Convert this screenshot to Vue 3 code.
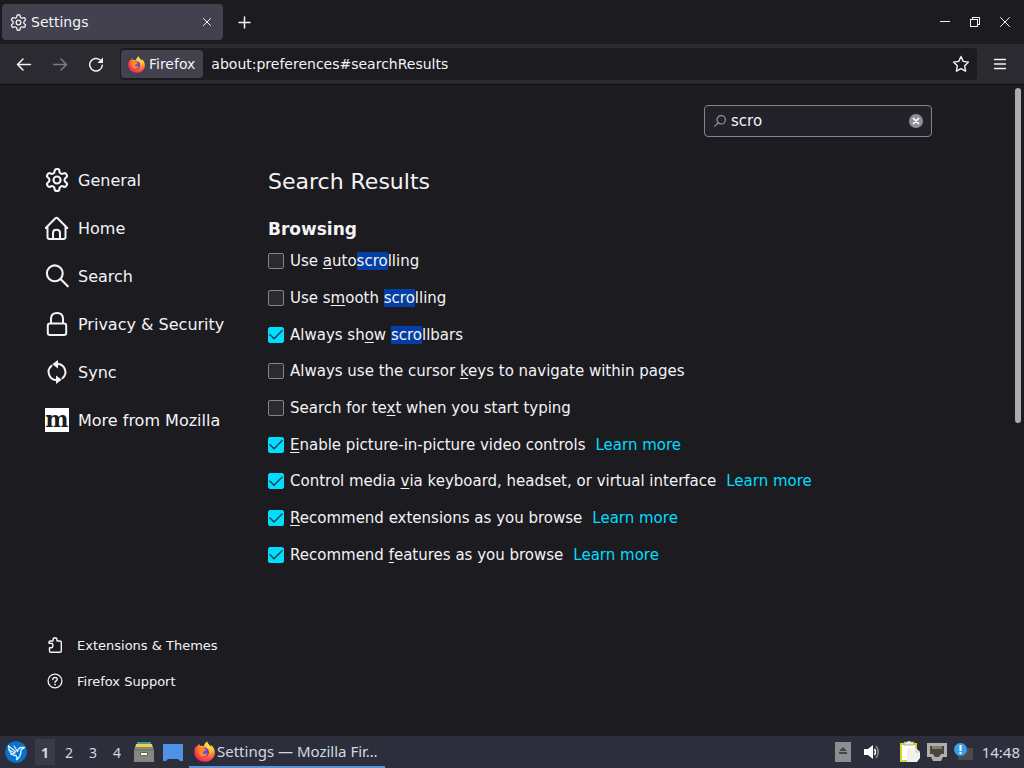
<script setup>
import { ref } from 'vue'

const url = ref('about:preferences#searchResults')
const query = ref('scro')

const gear =
  'M12.22 2h-.44a2 2 0 0 0-2 2v.18a2 2 0 0 1-1 1.73l-.43.25a2 2 0 0 1-2 0l-.15-.08a2 2 0 0 0-2.73.73l-.22.38a2 2 0 0 0 .73 2.73l.15.1a2 2 0 0 1 1 1.72v.51a2 2 0 0 1-1 1.74l-.15.09a2 2 0 0 0-.73 2.73l.22.38a2 2 0 0 0 2.73.73l.15-.08a2 2 0 0 1 2 0l.43.25a2 2 0 0 1 1 1.73V20a2 2 0 0 0 2 2h.44a2 2 0 0 0 2-2v-.18a2 2 0 0 1 1-1.73l.43-.25a2 2 0 0 1 2 0l.15.08a2 2 0 0 0 2.73-.73l.22-.39a2 2 0 0 0-.73-2.73l-.15-.08a2 2 0 0 1-1-1.74v-.5a2 2 0 0 1 1-1.74l.15-.09a2 2 0 0 0 .73-2.73l-.22-.38a2 2 0 0 0-2.73-.73l-.15.08a2 2 0 0 1-2 0l-.43-.25a2 2 0 0 1-1-1.73V4a2 2 0 0 0-2-2z'

const nav = [
  { id: 'general', label: 'General' },
  { id: 'home', label: 'Home' },
  { id: 'search', label: 'Search' },
  { id: 'privacy', label: 'Privacy & Security' },
  { id: 'sync', label: 'Sync' },
  { id: 'mozilla', label: 'More from Mozilla' }
]

// Each label is split into parts: u = access key, m = search match.
const options = ref([
  { id: 'auto', on: false, parts: [{ t: 'Use ' }, { t: 'a', k: 'u' }, { t: 'uto' }, { t: 'scro', k: 'm' }, { t: 'lling' }] },
  { id: 'smooth', on: false, parts: [{ t: 'Use s' }, { t: 'm', k: 'u' }, { t: 'ooth ' }, { t: 'scro', k: 'm' }, { t: 'lling' }] },
  { id: 'bars', on: true, parts: [{ t: 'Always sh' }, { t: 'o', k: 'u' }, { t: 'w ' }, { t: 'scro', k: 'm' }, { t: 'llbars' }] },
  { id: 'cursor', on: false, parts: [{ t: 'Always use the cursor ' }, { t: 'k', k: 'u' }, { t: 'eys to navigate within pages' }] },
  { id: 'typing', on: false, parts: [{ t: 'Search for te' }, { t: 'x', k: 'u' }, { t: 't when you start typing' }] },
  { id: 'pip', on: true, link: true, parts: [{ t: 'E', k: 'u' }, { t: 'nable picture-in-picture video controls' }] },
  { id: 'media', on: true, link: true, parts: [{ t: 'Control media ' }, { t: 'v', k: 'u' }, { t: 'ia keyboard, headset, or virtual interface' }] },
  { id: 'ext', on: true, link: true, parts: [{ t: 'R', k: 'u' }, { t: 'ecommend extensions as you browse' }] },
  { id: 'feat', on: true, link: true, parts: [{ t: 'Recommend ' }, { t: 'f', k: 'u' }, { t: 'eatures as you browse' }] }
])
</script>

<template>
  <div class="screen">
    <svg class="defs" width="0" height="0" aria-hidden="true">
      <defs>
        <radialGradient id="flame" cx="0.75" cy="0.15" r="1">
          <stop offset="0" stop-color="#fff04a" />
          <stop offset="0.35" stop-color="#ffb52a" />
          <stop offset="0.65" stop-color="#ff5a36" />
          <stop offset="1" stop-color="#e4196f" />
        </radialGradient>
        <radialGradient id="globe" cx="0.5" cy="0.4" r="0.6">
          <stop offset="0" stop-color="#8a4ff0" />
          <stop offset="1" stop-color="#5a35b8" />
        </radialGradient>
        <symbol id="fox" viewBox="0 0 20 20">
          <path fill="url(#flame)" d="M12.6.3c.3 1.8 1.3 2.8 2.6 4 .5.4 1 .9 1.3 1.4 0-.8-.2-1.5-.5-2.2 2.5 1.7 3.9 4.5 3.9 7.4 0 5-4.3 8.900-9.700 8.900S.3 16 .3 10.700c0-2.400.8-4.700 2.200-6.300 0 .5 0 .9.2 1.300C3.200 4.300 4 3.200 5 2.500c0 .9.3 1.600.9 2.200 1.300-.3 2.400-.1 3.400.4C9.700 3.200 10.800 1.400 12.600.3z" />
          <circle cx="10" cy="10.600" r="4.300" fill="url(#globe)" />
          <path fill="#ff8a22" d="M4.800 6.500c1.700-.7 3.500-.4 4.700.6 1 .1 1.800.3 2 .8-.2 1.100-1.700 1.300-2.400 1.900-.5.500-.2 1.300-.9 1.700 1 1.500 3.200 1 4.600.2-.7 2.500-3.200 3.800-5.600 2.900C4.300 13.500 3.500 9.500 4.800 6.500z" />
        </symbol>
      </defs>
    </svg>

    <header class="tabs">
      <div class="tab">
        <svg width="17" height="17" viewBox="1 1 22 22" class="line"><path :d="gear" stroke-width="1.700" /><circle cx="12" cy="12" r="3" stroke-width="1.700" /></svg>
        <span class="tab-title">Settings</span>
        <button class="bare" aria-label="Close tab">
          <svg width="16" height="16" viewBox="0 0 16 16" class="line"><path d="M4.500 4.500l7 7M11.500 4.500l-7 7" /></svg>
        </button>
      </div>
      <button class="bare new-tab" aria-label="New tab">
        <svg width="16" height="16" viewBox="0 0 16 16" class="line"><path d="M8.500 3v11M3 8.500h11" stroke-width="1.500" /></svg>
      </button>
      <div class="window-buttons">
        <button class="bare" aria-label="Minimize"><svg width="12" height="12" viewBox="0 0 12 12" class="line crisp"><path d="M1 5.500h10" /></svg></button>
        <button class="bare" aria-label="Restore"><svg width="12" height="12" viewBox="0 0 12 12" class="line crisp"><path d="M1.500 3.500h7v7h-7zM3.500 3V1.500h7v7H9" /></svg></button>
        <button class="bare" aria-label="Close"><svg width="12" height="12" viewBox="0 0 12 12" class="line"><path d="M1.500 1.500l9 9M10.500 1.500l-9 9" /></svg></button>
      </div>
    </header>

    <div class="toolbar">
      <button class="bare" aria-label="Back"><svg width="16" height="16" viewBox="0 0 16 16" class="line"><path d="M14.500 8.500H1.500M7 3l-5.500 5.500L7 14" stroke-width="1.500" /></svg></button>
      <button class="bare" aria-label="Forward" disabled><svg width="16" height="16" viewBox="0 0 16 16" class="line dim"><path d="M1.500 8.500h13M9 3l5.500 5.500L9 14" stroke-width="1.500" /></svg></button>
      <button class="bare" aria-label="Reload"><svg width="16" height="16" viewBox="0 0 16 16" class="line"><path d="M14.300 9.200A6.300 6.300 0 1 1 12.200 4" stroke-width="1.500" /><path d="M15 1.500v5.500H9.500z" fill="currentColor" stroke="none" /></svg></button>
      <div class="urlbar">
        <button class="identity"><svg width="17" height="17"><use href="#fox" /></svg>Firefox</button>
        <input v-model="url" class="url" type="text" aria-label="Address" />
        <button class="bare star" aria-label="Bookmark"><svg width="18" height="18" viewBox="0 0 18 18" class="line"><path d="M9 1.500l2.300 4.900 5.200.7-3.800 3.700.9 5.400L9 13.600l-4.600 2.600.9-5.400L1.500 7.100l5.200-.7z" stroke-width="1.400" /></svg></button>
      </div>
      <button class="bare menu" aria-label="Menu"><svg width="14" height="14" viewBox="0 0 14 14" class="line"><path d="M1.500 2.500h11M1.500 7h11M1.500 11.500h11" stroke-width="1.300" /></svg></button>
    </div>

    <div class="page">
      <aside class="sidebar">
        <nav class="categories">
          <a v-for="n in nav" :key="n.id" href="#" class="category">
            <span v-if="n.id === 'mozilla'" class="moz" aria-hidden="true">m</span>
            <svg v-else width="24" height="24" viewBox="0 0 24 24" class="line">
              <g v-if="n.id === 'general'" stroke-width="1.900" transform="translate(-1.200 -1.200) scale(1.100)"><path :d="gear" /><circle cx="12" cy="12" r="3.200" /></g>
              <g v-if="n.id === 'home'" stroke-width="2"><path d="M.7 12L10.400 2.300Q11.500 1.200 12.600 2.300L22.300 12M2.500 10.500V21Q2.500 23 4.500 23H18.500Q20.500 23 20.500 21V10.500M8 23V17Q8 13.800 11.500 13.800T15 17V23" /></g>
              <g v-if="n.id === 'search'" stroke-width="2.100"><circle cx="9.800" cy="9.300" r="7.900" /><path d="M15.500 15L22.800 22.300" /></g>
              <g v-if="n.id === 'privacy'" stroke-width="2"><rect x="2.800" y="11.500" width="18.400" height="11.500" rx="2.200" /><path d="M6 11V7Q6 1 12 1T18 7V11" /></g>
              <g v-if="n.id === 'sync'" stroke-width="2"><path d="M6.600 5.800A8 8 0 0 0 12 20M12 4A8 8 0 0 1 17.400 18.200" /><path d="M7.300 4.300L13 0V8.600z M16.700 19.700L11 15.400V24z" fill="currentColor" stroke="none" /></g>
            </svg>
            <span>{{ n.label }}</span>
          </a>
        </nav>
        <div class="side-foot">
          <a href="#" class="foot-link">
            <svg width="16" height="16" viewBox="0 0 16 16" class="line"><path d="M2.500 14V10.700H4.200Q6 10.500 6 8.500T4.200 6.300H2V5.200Q2 4 3.200 4H6V3Q6 .8 8 .8T10 3V4H13Q14.300 4 14.300 5.200V14Q14.300 15.200 13 15.200H3.700Q2.500 15.200 2.500 14z" stroke-width="1.400" /></svg>
            <span>Extensions &amp; Themes</span>
          </a>
          <a href="#" class="foot-link">
            <svg width="16" height="16" viewBox="0 0 16 16" class="line"><circle cx="8" cy="8" r="6.900" stroke-width="1.300" /><path d="M5.800 6.500Q5.900 4.500 8 4.500T10.200 6.400C10.200 7.800 8 7.900 8 9.500" stroke-width="1.400" /><circle cx="8" cy="11.600" r=".9" fill="currentColor" stroke="none" /></svg>
            <span>Firefox Support</span>
          </a>
        </div>
      </aside>

      <main class="content">
        <div class="search-box">
          <svg width="12" height="12" viewBox="0 0 12 12" class="line glass"><circle cx="7.200" cy="4.800" r="4.200" stroke-width="1.200" /><path d="M4.200 7.800L.8 11.200" stroke-width="1.200" /></svg>
          <input v-model="query" type="text" class="search-input" aria-label="Find in Settings" />
          <button class="bare clear" aria-label="Clear"><svg width="14" height="14" viewBox="0 0 14 14"><circle cx="7" cy="7" r="7" fill="#8f8f96" /><path d="M4.500 4.500l5 5M9.500 4.500l-5 5" stroke="#fff" stroke-width="1.700" stroke-linecap="round" /></svg></button>
        </div>
        <h1>Search Results</h1>
        <h2>Browsing</h2>
        <div class="options">
          <div v-for="o in options" :key="o.id" class="option">
            <input :id="o.id" v-model="o.on" type="checkbox" class="check" />
            <label :for="o.id"><span v-for="(p, i) in o.parts" :key="i" :class="{ key: p.k === 'u', match: p.k === 'm' }">{{ p.t }}</span></label>
            <a v-if="o.link" href="#" class="learn">Learn more</a>
          </div>
        </div>
      </main>
      <div class="scrollbar"><div class="thumb"></div></div>
    </div>

    <footer class="taskbar">
      <button class="bare launcher" aria-label="Applications">
        <svg width="22" height="22" viewBox="0 0 22 22"><circle cx="11" cy="11" r="10.800" fill="#0873cc" /><path d="M3.500 5l7 5.500M4 9l6 3M6 13.500l4-1.500M9 5l3.500 5.500" fill="none" stroke="#dff1ff" stroke-width="1.300" stroke-linecap="round" /><path d="M3.500 5C4 11 6 14 10 14.500c2 .3 2.500 2 1.500 4 4-2 4.500-6 4.500-9.500l3.500-2.500h-3c-2.500 0-3.500 1.500-4 4" fill="none" stroke="#dff1ff" stroke-width="1.400" stroke-linejoin="round" stroke-linecap="round" /></svg>
      </button>
      <div class="desks">
        <button v-for="d in 4" :key="d" class="desk" :class="{ active: d === 1 }">{{ d }}</button>
      </div>
      <button class="bare files" aria-label="Files">
        <svg width="20" height="20" viewBox="0 0 20 20"><path d="M3 0h14v3H3z" fill="#3d9c94" /><path d="M2 2h16l1 4H1z" fill="#e8d24c" /><path d="M1 5h18l1 3v12H0V8z" fill="#87877f" /><path d="M0 8h20" stroke="#6d6d66" /><rect x="6" y="10" width="8" height="4" rx="1" fill="#66665f" /><rect x="7" y="11" width="6" height="2" fill="#fff" /></svg>
      </button>
      <button class="bare show-desk" aria-label="Show desktop">
        <svg width="20" height="17" viewBox="0 0 20 17"><path d="M0 0h20v17h-3l-2-2H5l-2 2H0z" fill="#4f91e2" /></svg>
      </button>
      <button class="task"><svg width="21" height="21"><use href="#fox" /></svg><span>Settings — Mozilla Fir…</span></button>
      <div class="tray">
        <svg class="eject" width="16" height="20" viewBox="0 0 16 20"><path d="M0 0h16v20H0z" fill="#8c8d91" /><path d="M4 9l4-4 4 4zM4 10h8v2H4z" fill="#44454c" /></svg>
        <svg class="sound" width="16" height="16" viewBox="0 0 16 16"><path d="M0 5h4l5-4v14l-5-4H0z" fill="#fff" /><path d="M10.500 5q2 3 0 6" fill="none" stroke="#fff" stroke-width="1.500" /><path d="M12 2q4.500 6 0 12" fill="none" stroke="#898c95" stroke-width="1.500" /></svg>
        <svg class="clip" width="20" height="22" viewBox="0 0 20 22"><path d="M0 2h17v19H0z" fill="#d6d929" /><path d="M2 4h13v15H2z" fill="#fff" /><path d="M4 1h3l1-1h2l1 1h3v3H4z" fill="#e9e9df" stroke="#92925f" stroke-width=".7" /><path d="M9 7h7l4 4v6l-3 4H7V11z" fill="#f1f1ee" /><path d="M16 7v4h4" fill="none" stroke="#c9c9c2" /></svg>
        <svg class="net" width="20" height="18" viewBox="0 0 20 18"><path d="M0 0h20v14h-4l-2 4H6l-2-4H0z" fill="#aeaeae" /><path d="M3 3h14v8h-3l-2 3H8l-2-3H3z" fill="#4a463c" /><path d="M6 3v3M8 3v3M10 3v3M12 3v3M14 3v3" stroke="#c5b98f" /></svg>
        <svg class="alert" width="20" height="18" viewBox="0 0 20 18"><path d="M9 5h10v12H4v-5" fill="#494b50" /><circle cx="6.500" cy="6.500" r="6.500" fill="#3ba0e6" /><path d="M6.500 2v6M6.500 9v2" stroke="#fff" stroke-width="2" /></svg>
        <time>14:48</time>
      </div>
    </footer>
  </div>
</template>

<style>
body {
  margin: 0;
  background: #1c1b20;
}
</style>

<style scoped>
.screen {
  display: flex;
  flex-direction: column;
  min-height: 100vh;
  background: #1c1b20;
  color: #f3f3f6;
  font-family: "DejaVu Sans", sans-serif;
  font-size: 14px;
}
.defs {
  position: absolute;
}
svg {
  flex: none;
  display: block;
}
a {
  color: inherit;
  text-decoration: none;
}
button,
input {
  font: inherit;
  color: inherit;
  margin: 0;
}
.line {
  fill: none;
  stroke: currentColor;
  stroke-linecap: round;
  stroke-linejoin: round;
}
.crisp {
  shape-rendering: crispEdges;
}
.dim {
  opacity: 0.4;
}
.bare {
  padding: 0;
  border: 0;
  background: none;
  display: flex;
  align-items: center;
  justify-content: center;
}
.tabs {
  display: flex;
  align-items: center;
  height: 44px;
}
.tab {
  display: flex;
  align-items: center;
  box-sizing: border-box;
  width: 221px;
  height: 36px;
  margin-left: 2px;
  padding: 0 8px;
  gap: 4px;
  border-radius: 4px;
  background: #42414d;
}
.tab-title {
  flex: 1;
}
.new-tab {
  margin-left: 13px;
}
.window-buttons {
  display: flex;
  gap: 18px;
  margin-left: auto;
  padding-right: 13px;
}
.toolbar {
  display: flex;
  align-items: center;
  gap: 20px;
  height: 40px;
  padding: 0 17px 0 16px;
  background: #2b2a31;
  border-bottom: 1px solid #0d0c11;
}
.urlbar {
  flex: 1;
  display: flex;
  align-items: center;
  height: 32px;
  margin-left: -4px;
  padding-right: 7px;
  border-radius: 4px;
  background: #1c1b20;
}
.identity {
  display: flex;
  align-items: center;
  gap: 4px;
  height: 28px;
  margin-left: 1px;
  padding: 0 8px 0 7px;
  border: 0;
  border-radius: 4px;
  background: #42414d;
}
.url {
  flex: 1;
  min-width: 0;
  padding: 0 8px;
  border: 0;
  outline: 0;
  background: none;
}
.menu {
  margin-left: -4px;
}
.page {
  flex: 1;
  display: flex;
}
.sidebar {
  display: flex;
  flex-direction: column;
  justify-content: space-between;
  box-sizing: border-box;
  width: 268px;
  padding: 71px 0 37px 45px;
}
.category {
  display: flex;
  align-items: center;
  gap: 9px;
  height: 48px;
  font-size: 16px;
}
.moz {
  width: 24px;
  height: 24px;
  background: #fff;
  color: #1c1b20;
  font: bold 22px/22px "DejaVu Serif", serif;
  text-align: center;
}
.foot-link {
  display: flex;
  align-items: center;
  gap: 14px;
  height: 36px;
  padding-left: 2px;
  font-size: 13px;
}
.content {
  flex: 1;
  display: flex;
  flex-direction: column;
  padding: 20px 83px 0 0;
}
.search-box {
  align-self: flex-end;
  display: flex;
  align-items: center;
  box-sizing: border-box;
  width: 228px;
  height: 32px;
  padding: 0 8px 0 9px;
  gap: 5px;
  border: 1px solid #85848c;
  border-radius: 4px;
  background: #23222b;
  font-size: 15px;
}
.search-input {
  flex: 1;
  min-width: 0;
  padding: 0;
  border: 0;
  outline: 0;
  background: none;
}
.glass {
  color: #96959d;
}
h1 {
  margin: 31px 0 0;
  font-size: 22px;
  line-height: 28px;
  font-weight: 400;
}
h2 {
  margin: 21px 0 0;
  font-size: 17px;
  line-height: 24px;
}
.options {
  display: grid;
  grid-auto-rows: 1fr;
  min-height: 330px;
  margin-top: 2px;
  font-size: 15px;
}
.option {
  display: flex;
  align-items: center;
}
.option label {
  margin-left: 6px;
  white-space: pre;
}
.check {
  appearance: none;
  flex: none;
  box-sizing: border-box;
  width: 16px;
  height: 16px;
  border: 1px solid #85848c;
  border-radius: 2px;
  background: #2b2a31;
}
.check:checked {
  border-color: #00ddff;
  background: #00ddff;
}
.check:checked::after {
  content: "";
  display: block;
  width: 14px;
  height: 14px;
  background: #17404c;
  clip-path: polygon(0 7px, 1px 6px, 5px 10px, 13px 2px, 14px 3px, 5px 12px);
}
.key {
  text-decoration: underline;
  text-underline-offset: 2px;
}
.match {
  background: #053fa5;
}
.learn {
  margin-left: 10px;
  color: #00ddff;
}
.scrollbar {
  width: 9px;
  padding-top: 3px;
}
.thumb {
  width: 6px;
  height: 335px;
  border-radius: 3px;
  background: #acabb1;
}
.taskbar {
  display: flex;
  align-items: center;
  height: 32px;
  background: #2c2f3b;
  color: #d5d8e0;
  font: 15px "Noto Sans", sans-serif;
}
.launcher {
  margin-left: 5px;
}
.desks {
  display: flex;
  gap: 4px;
  margin-left: 8px;
}
.desk {
  width: 20px;
  height: 26px;
  padding: 0;
  border: 0;
  background: none;
  font-size: 14px;
}
.desk.active {
  background: #393b47;
  font-weight: 700;
}
.files {
  margin-left: 7px;
}
.show-desk {
  margin-left: 9px;
}
.task {
  display: flex;
  align-items: center;
  gap: 2px;
  box-sizing: border-box;
  width: 196px;
  height: 32px;
  margin-left: 6px;
  padding: 0 0 0 5px;
  border: 0;
  border-bottom: 2px solid #5b94d6;
  background: none;
  white-space: nowrap;
}
.tray {
  display: flex;
  align-items: center;
  margin-left: auto;
  padding-right: 4px;
}
.sound {
  margin-left: 13px;
}
.clip {
  margin-left: 20px;
}
.net,
.alert {
  margin-left: 7px;
}
.tray time {
  margin-left: 8px;
}
</style>
